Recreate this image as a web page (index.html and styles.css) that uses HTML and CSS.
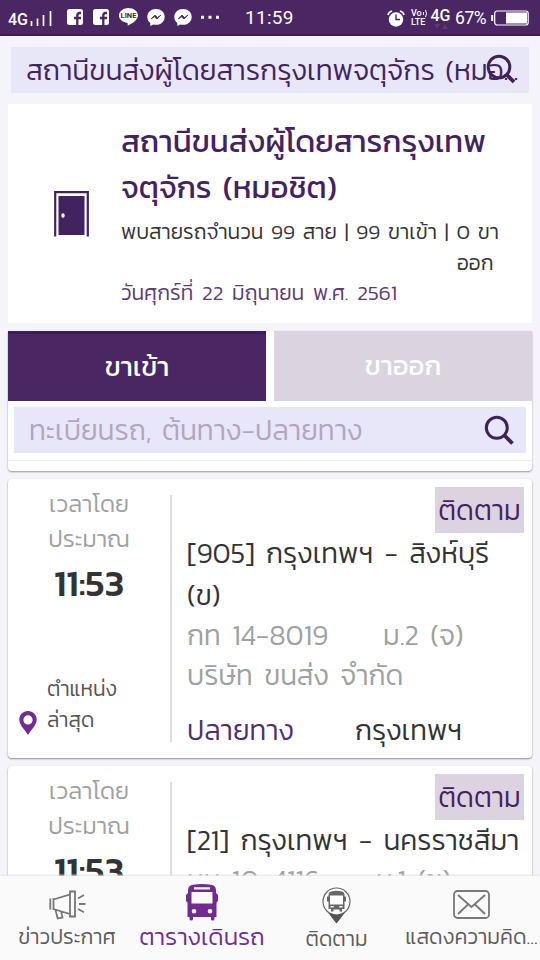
FILE: index.html
```
<!DOCTYPE html>
<html lang="th">
<head>
<meta charset="utf-8">
<title>ตารางเดินรถ</title>
<link rel="stylesheet" href="styles.css">
</head>
<body>
<div class="screen">
  <header class="status">
    <div class="status-left">
      <span class="net">4G</span>
      <svg class="bars" width="23" height="16" viewBox="0 0 23 16"><path d="M2.500 10v5M8.500 7.500v7.500M14.500 4v11M21.500 0v15" stroke="#fff" stroke-width="1.700"/></svg>
      <svg class="fb" width="16" height="16" viewBox="0 0 16 16"><rect width="16" height="16" rx="2.500" fill="#fff"/><path d="M10.300 16V6.500q0-2.500 2.500-2.500H14M7 9h7" fill="none" stroke="#4a2762" stroke-width="2.300"/></svg>
      <svg class="fb" width="16" height="16" viewBox="0 0 16 16"><rect width="16" height="16" rx="2.500" fill="#fff"/><path d="M10.300 16V6.500q0-2.500 2.500-2.500H14M7 9h7" fill="none" stroke="#4a2762" stroke-width="2.300"/></svg>
      <span class="line-app"><svg width="19" height="18" viewBox="0 0 20 19"><path d="M10 0C4.500 0 0 3.500 0 8c0 4 3.500 7 8.500 7.600q1 .2 .7 3.200C14 16.500 20 12.500 20 8c0-4.500-4.500-8-10-8z" fill="#fff"/></svg><b>LINE</b></span>
      <svg class="msg" width="18" height="17" viewBox="0 0 18 17"><path d="M9 0C4 0 .3 3.500.3 8c0 2.500 1 4.500 3 6v3l3-1.500C13 17 17.700 13 17.700 8S14 0 9 0z" fill="#fff"/><path d="M4 10l4-4 2.500 2.500L14 6l-4 4-2.500-2.200z" fill="#4a2762" stroke="#4a2762" stroke-width=".8"/></svg>
      <svg class="msg" width="18" height="17" viewBox="0 0 18 17"><path d="M9 0C4 0 .3 3.500.3 8c0 2.500 1 4.500 3 6v3l3-1.500C13 17 17.700 13 17.700 8S14 0 9 0z" fill="#fff"/><path d="M4 10l4-4 2.500 2.500L14 6l-4 4-2.500-2.200z" fill="#4a2762" stroke="#4a2762" stroke-width=".8"/></svg>
      <svg class="more" width="18" height="4" viewBox="0 0 18 4"><path d="M0 .7h3v3H0zM7.500 .7h3v3h-3zM15 .7h3v3h-3z" fill="#fff"/></svg>
    </div>
    <span class="clock">11:59</span>
    <div class="status-right">
      <svg class="alarm" width="18" height="17" viewBox="0 0 18 17"><circle cx="9" cy="9.500" r="7.200" fill="#fff"/><path d="M1 5Q1.500 2 5 1M17 5Q16.500 2 13 1" fill="none" stroke="#fff" stroke-width="1.600"/><path d="M9 4.500v5h4" fill="none" stroke="#4a2762" stroke-width="1.400"/></svg>
      <div class="volte"><span class="vo">Vo<svg width="5" height="7" viewBox="0 0 5 7" fill="none" stroke="#fff"><path d="M.5 2v3M2.500 0q2 3.500 0 7"/></svg></span><span>LTE</span></div>
      <span class="net-right"><b>4G</b><svg width="14" height="5" viewBox="0 0 14 5"><path d="M0 0h6L3 5zM8 5h6l-3-5z" fill="#5c3b74"/></svg></span>
      <span class="pct">67%</span>
      <svg class="battery" width="38" height="16" viewBox="0 0 38 16"><path d="M1.200 5v6" stroke="#fff" stroke-width="2"/><rect x="3.700" y="1" width="33.500" height="14" rx="2.500" fill="none" stroke="#fff" stroke-width="1.200"/><rect x="15" y="2.500" width="21" height="11" fill="#fff"/></svg>
    </div>
  </header>

  <div class="station-search">
    <span class="station-value">สถานีขนส่งผู้โดยสารกรุงเทพจตุจักร (หมอ...</span>
    <svg class="search-icon overlap" width="31" height="31" viewBox="0 0 31 31"><circle cx="13" cy="13" r="10.800"/><path d="M20.500 20.500L28 28"/></svg>
  </div>

  <section class="station-card">
    <svg class="door" width="35" height="46" viewBox="0 0 35 46"><path d="M1.200 45.500V1.200h32.600v44.300" fill="none" stroke="#43235f" stroke-width="2.200"/><rect x="4.500" y="5" width="26" height="39" fill="#43235f"/><ellipse cx="9" cy="24.500" rx="1.700" ry="2.200" fill="#fff"/></svg>
    <div class="station-text">
      <h1>สถานีขนส่งผู้โดยสารกรุงเทพ<br>จตุจักร (หมอชิต)</h1>
      <p class="count">พบสายรถจำนวน 99 สาย | 99 ขาเข้า | 0 ขา<br><span class="count-end">ออก</span></p>
      <p class="date">วันศุกร์ที่ 22 มิถุนายน พ.ศ. 2561</p>
    </div>
  </section>

  <section class="filter">
    <div class="tabs"><div class="tab active">ขาเข้า</div><div class="tab">ขาออก</div></div>
    <div class="filter-box"><span class="placeholder">ทะเบียนรถ, ต้นทาง-ปลายทาง</span>
      <svg class="search-icon" width="31" height="31" viewBox="0 0 31 31"><circle cx="12.800" cy="12.800" r="10.500"/><path d="M20 20L28.500 28.500"/></svg>
    </div>
    <div class="rule"></div>
  </section>

  <main class="trips">
    <article class="trip">
      <div class="when">
        <p class="label">เวลาโดย<br>ประมาณ</p>
        <p class="time">11:53</p>
        <div class="place">
          <svg width="18" height="24" viewBox="0 0 18 24"><path d="M9 0C4 0 .3 3.800 .3 8.500.3 14 6 19 9 24c3-5 8.700-10 8.700-15.500C17.700 3.800 14 0 9 0zm0 4.300a4.600 4.600 0 1 1 0 9.200 4.600 4.600 0 0 1 0-9.200z" fill="#702c91"/></svg>
          <p>ตำแหน่ง<br>ล่าสุด</p>
        </div>
      </div>
      <div class="detail">
        <button class="follow">ติดตาม</button>
        <p class="route">[905] กรุงเทพฯ - สิงห์บุรี<br>(ข)</p>
        <p class="bus"><span class="plate">กท 14-8019</span><span>ม.2 (จ)</span></p>
        <p class="bus">บริษัท ขนส่ง จำกัด</p>
        <p class="dest"><span class="dest-label">ปลายทาง</span><span>กรุงเทพฯ</span></p>
      </div>
    </article>
    <article class="trip">
      <div class="when">
        <p class="label">เวลาโดย<br>ประมาณ</p>
        <p class="time">11:53</p>
      </div>
      <div class="detail">
        <button class="follow">ติดตาม</button>
        <p class="route">[21] กรุงเทพฯ - นครราชสีมา</p>
        <p class="bus"><span class="plate short">นม 10-4116</span><span>ม.1 (ข)</span></p>
      </div>
    </article>
  </main>

  <nav class="nav">
    <a class="item n1"><svg width="37" height="30" viewBox="0 0 37 30" fill="none" stroke="#777" stroke-width="1.800"><path d="M1.300 8.500v11M4.500 8v12M4.500 9.500L21 4.500V24L4.500 19M21 1.500h5v25h-5zM6.500 20l2.200 8.500 4.800-.9-1.300-5.500M29 8.500l6-3.500M30 14h6.500M29 19l6 3.200"/></svg><span>ข่าวประกาศ</span></a>
    <a class="item n2"><svg width="34" height="37" viewBox="0 0 34 37"><path fill="#702c91" fill-rule="evenodd" d="M8 .8Q17-.8 26 .8q4.500 .7 5 5V9l2 2v6l-1.500 1.500V33h-2v2q0 1.500-1.800 1.500T26 35v-2H8v2q0 1.500-1.800 1.500T4.500 35v-2h-2V18.500L1 17v-6l2-2V5.800Q3.500 1.500 8 .8zM9 3.200v2.300h16V3.200zM6.500 8v11.500h21V8zM9 25a2.300 2.300 0 1 0 0 4.600 2.300 2.300 0 0 0 0-4.600zm16 0a2.300 2.300 0 1 0 0 4.600 2.300 2.300 0 0 0 0-4.600z"/></svg><span>ตารางเดินรถ</span></a>
    <a class="item n3"><svg width="29" height="37" viewBox="0 0 29 37"><path d="M4 23q10 9 21 0l-10.500 13.500z" fill="#555"/><circle cx="14.500" cy="14.500" r="13.500" fill="#fff" stroke="#666" stroke-width="1.200"/><path d="M7 26q7.500 4 15 0l-7.500 10z" fill="#555"/><path fill="#666" fill-rule="evenodd" d="M9 4.500q5.500-1.500 11 0 2.500.5 2.500 3v2h1.500v5h-1.500V22H20v2.500h-2.500v-2h-6v2H9V22H6.500v-7.500H5v-5h1.500v-2q0-2.500 2.500-3zM8 8.500v9h13v-9zM8.500 19v1.500h3.200V19zm8.800 0v1.500h3.200V19z"/></svg><span>ติดตาม</span></a>
    <a class="item n4"><svg width="37" height="29" viewBox="0 0 37 29" fill="none" stroke="#777" stroke-width="1.800"><rect x="1" y="1" width="35" height="27" rx="3.500"/><path d="M5 5l13.500 12L32 5M5 24l10-9.500M32 24l-10-9.500"/></svg><span>แสดงความคิด...</span></a>
  </nav>
</div>
</body>
</html>
```
FILE: styles.css
```
* { box-sizing: border-box; margin: 0; padding: 0; }
body { background: #f4f4fa; font-family: "Kanit", "Prompt", "Noto Sans Thai", "Inter", sans-serif; font-weight: 300; color: #333; }
.screen { width: 540px; height: 960px; overflow: hidden; display: flex; flex-direction: column; }
span, p, h1 { white-space: nowrap; }
svg { display: block; flex: none; }

.status { flex: none; height: 36px; background: #4a2762; border-bottom: 2px solid #3a1b56; color: #fff; font-family: Roboto, sans-serif; font-weight: 400; display: flex; align-items: center; }
.status-left { width: 245px; height: 36px; padding-left: 8px; display: flex; align-items: center; }
.net { font: 500 16px/20px Roboto, sans-serif; padding-top: 5px; width: 21px; }
.bars { margin-top: 3px; }
.fb { margin-left: 15px; }
.fb + .fb { margin-left: 10px; }
.line-app { position: relative; margin-left: 10px; }
.line-app b { position: absolute; left: 0; top: 3px; width: 19px; text-align: center; font: 700 7.500px/9px Roboto, sans-serif; color: #333; }
.msg { margin-left: 9px; }
.more { margin-left: 9px; }
.clock { width: 50px; font-size: 19px; line-height: 24px; letter-spacing: .3px; padding-top: 2px; }
.status-right { display: flex; align-items: center; height: 36px; padding: 2px 0 0 92px; }
.volte { font: 500 9px/9px Roboto, sans-serif; margin-left: 6px; width: 17px; display: flex; flex-direction: column; }
.vo { display: flex; align-items: center; gap: 1px; }
.net-right { width: 21px; margin-left: 2px; display: flex; flex-direction: column; align-items: center; }
.net-right b { font: 500 16px/17px Roboto, sans-serif; }
.pct { margin-left: 4px; width: 36px; font-size: 17.500px; letter-spacing: -.4px; }

.station-search { flex: none; margin: 11px 11px 0; height: 46px; background: #e8e7f7; display: flex; align-items: center; padding-left: 15px; position: relative; color: #43235f; }
.station-value { font-size: 28.300px; line-height: 46px; word-spacing: 4px; }
.search-icon { fill: none; stroke: #3d2259; stroke-width: 3; }
.search-icon path { stroke-width: 3.800; }
.overlap { position: absolute; left: 475px; top: 7px; }

.station-card { flex: none; margin: 11px 8px 0; height: 219px; background: #fff; display: flex; padding: 14px 0 0 46px; }
.door { margin-top: 73px; }
.station-text { margin-left: 32px; }
h1 { font-size: 31.200px; line-height: 46px; font-weight: 400; color: #43235f; word-spacing: 4px; }
.count { font-size: 21px; line-height: 31px; margin-top: 6px; color: #333; word-spacing: 3px; }
.count-end { margin-left: 336px; }
.date { font-size: 21px; line-height: 30px; color: #5b3c75; word-spacing: 4px; }

.filter { flex: none; margin: 8px 8px 0; height: 140px; background: #fff; border-radius: 0 0 4px 4px; box-shadow: 0 1px 2px #999; }
.tabs { display: flex; gap: 8px; }
.tab { flex: 1; height: 70px; line-height: 70px; text-align: center; background: #dcd3e1; color: #fff; font-size: 27.500px; font-weight: 400; }
.tab.active { background: #4a2762; border-top: 3px solid #3d1b5c; line-height: 66px; }
.filter-box { margin: 6px 6px 0; height: 46px; background: #e8e7f9; display: flex; align-items: center; justify-content: space-between; padding: 0 11px 0 15px; }
.placeholder { font-size: 28.200px; line-height: 46px; color: #b3a5bd; word-spacing: 4px; }
.rule { margin-top: 7px; height: 1px; background: #f1f1f3; }

.trips { flex: none; height: 405px; overflow: hidden; padding: 8px 8px 0; display: flex; flex-direction: column; gap: 8px; }
.trip { flex: none; height: 279px; background: #fff; border-radius: 4px; box-shadow: 0 1px 2px #888; display: flex; padding: 16px 8px; }
.when { width: 156px; padding-right: 8px; border-right: 2px solid #dcdcdc; }
.label { text-align: center; font-size: 23.700px; line-height: 35px; color: #a0a0a0; margin-top: -9px; }
.time { text-align: center; font-size: 37px; line-height: 46px; font-weight: 500; color: #333; margin-top: 4px; }
.place { display: flex; align-items: flex-end; margin: 67px 0 0 3px; color: #555; }
.place p { font-size: 21px; line-height: 31px; margin-left: 10px; }
.detail { flex: 1; margin: -8px 0 0 15px; }
.follow { display: block; margin-left: auto; width: 89px; height: 46px; border: 0; background: #dcd3e1; color: #43235f; font: inherit; font-size: 28px; line-height: 46px; }
.route { font-size: 28px; line-height: 42px; margin-top: -1px; color: #333; word-spacing: 5px; }
.bus { font-size: 28px; line-height: 40px; color: #a0a0a0; word-spacing: 5px; position: relative; top: -1px; }
.plate { display: inline-block; width: 196px; }
.plate.short { width: 189px; }
.dest { font-size: 28px; line-height: 42px; margin-top: 13px; }
.dest-label { color: #4f3069; display: inline-block; width: 168px; }

.nav { flex: none; height: 84px; background: #fafafa; display: flex; position: relative; box-shadow: 0 -1px 2px #e4e4e4; }
.item { display: flex; flex-direction: column; align-items: center; justify-content: space-between; padding-bottom: 8px; width: 134px; color: #5c5c5c; font-size: 21px; line-height: 30px; }
.item svg { margin-top: 14px; }
.n2 { color: #702c91; font-size: 24px; width: 136px; }
.n2 svg { margin-top: 8px; }
.n3 { width: 133px; }
.n3 svg { margin-top: 11px; }
.n4 { width: 137px; font-size: 21.300px; }
```
